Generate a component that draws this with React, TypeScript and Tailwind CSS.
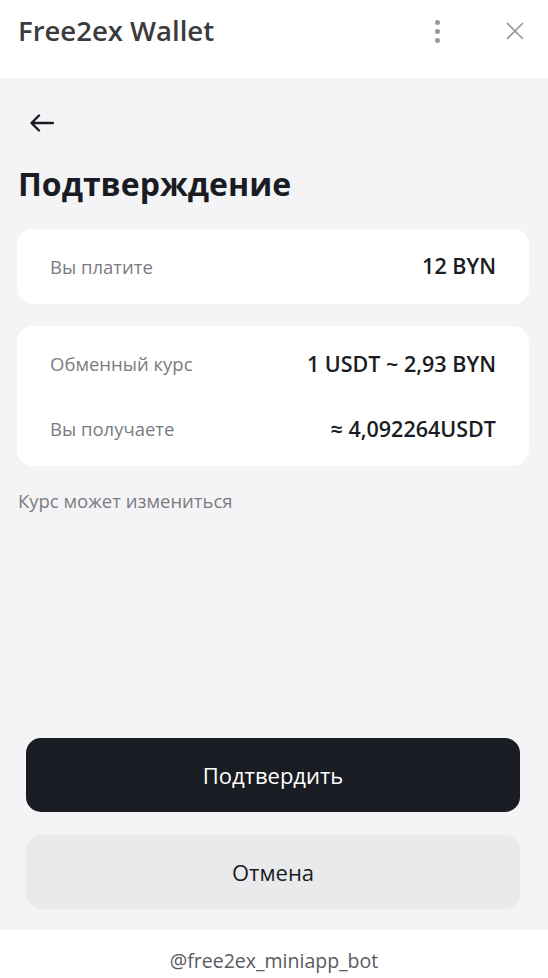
export default function App() {
  const font = { fontFamily: '"Open Sans", "Noto Sans", sans-serif' };
  return (
    <div className="flex h-[978px] w-[548px] flex-col bg-[#f4f4f6]" style={font}>
      {/* Header */}
      <div className="flex h-[78px] shrink-0 items-center bg-white pl-[18px] pr-[24px]">
        <div className="flex-1 pb-[16px] text-[27.5px] font-semibold text-[#3b3b3d]">Free2ex Wallet</div>
        <div className="mb-[16px] mr-[66px] flex flex-col gap-[4px]">
          <span className="h-[5px] w-[5px] rounded-full bg-[#9a9a9a]" />
          <span className="h-[5px] w-[5px] rounded-full bg-[#9a9a9a]" />
          <span className="h-[5px] w-[5px] rounded-full bg-[#9a9a9a]" />
        </div>
        <svg width="18" height="18" viewBox="0 0 18 18" className="mb-[16px]">
          <path d="M1 1 L17 17 M17 1 L1 17" stroke="#9a9a9a" strokeWidth="1.6" fill="none" />
        </svg>
      </div>

      {/* Content */}
      <div className="flex flex-1 flex-col pl-[17px] pr-[19px]">
        <div className="pl-[13px] pt-[36px]">
          <svg width="24" height="18" viewBox="0 0 24 18">
            <path d="M23 9 H2 M9 1.5 L1.5 9 L9 16.5" stroke="#1a1c23" strokeWidth="2.4" fill="none" strokeLinecap="round" strokeLinejoin="round" />
          </svg>
        </div>
        <h1 className="mt-[32px] pl-[1px] text-[32px] font-bold leading-[40px] text-[#1a1c23]">Подтверждение</h1>

        <div className="mt-[25px] flex h-[75px] items-center justify-between rounded-[16px] bg-white px-[33px]">
          <span className="text-[18.5px] text-[#7b7b80]">Вы платите</span>
          <span className="text-[21.5px] font-semibold text-[#1a1c23]">12 BYN</span>
        </div>

        <div className="mt-[22px] flex h-[140px] flex-col justify-center gap-[40px] rounded-[16px] bg-white px-[33px]">
          <div className="flex items-center justify-between leading-[25px]">
            <span className="text-[18.5px] text-[#7b7b80]">Обменный курс</span>
            <span className="text-[21.5px] font-semibold text-[#1a1c23]">1 USDT ~ 2,93 BYN</span>
          </div>
          <div className="flex items-center justify-between leading-[25px]">
            <span className="text-[18.5px] text-[#7b7b80]">Вы получаете</span>
            <span className="text-[21.5px] font-semibold text-[#1a1c23]">≈ 4,092264USDT</span>
          </div>
        </div>

        <div className="mt-[21px] pl-[1px] text-[18.5px] text-[#7b7b80]">Курс может измениться</div>

        <div className="flex-1" />

        <div className="flex flex-col gap-[23px] px-[9px] pb-[21px]">
          <button className="flex h-[74px] items-center justify-center rounded-[15px] bg-[#1a1c23] text-[22px] text-white">
            Подтвердить
          </button>
          <button className="flex h-[74px] items-center justify-center rounded-[15px] bg-[#e9eaec] text-[22px] text-[#1a1c23]">
            Отмена
          </button>
        </div>
      </div>

      {/* Footer */}
      <div className="flex h-[48px] shrink-0 justify-center bg-white pt-[16px] text-[19.5px] leading-[29px] text-[#5a5a5e]">
        @free2ex_miniapp_bot
      </div>
    </div>
  );
}
